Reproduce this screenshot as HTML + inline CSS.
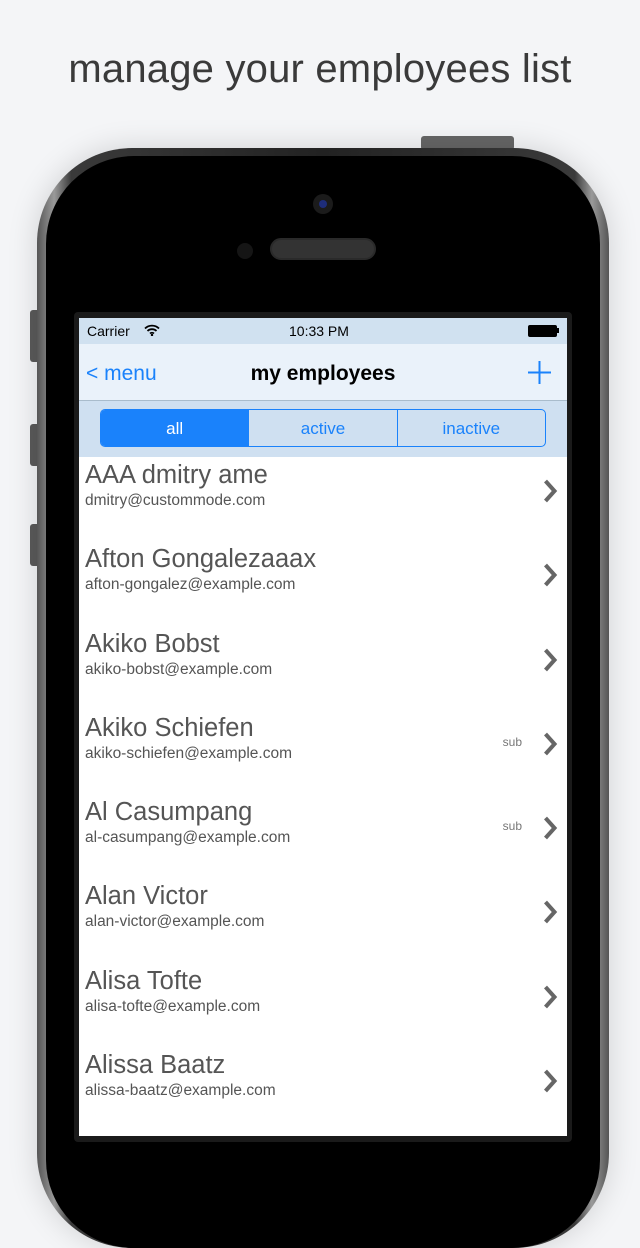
<!DOCTYPE html>
<html><head><meta charset="utf-8"><style>
*{margin:0;padding:0;box-sizing:border-box}
body{width:640px;height:1136px;background:#f4f5f7;overflow:hidden;position:relative;font-family:"Liberation Sans",sans-serif}
.h{position:absolute;top:47px;left:0;width:640px;text-align:center;font-size:40px;color:#3a3a3a;letter-spacing:0.2px}
.phone{position:absolute;left:37px;top:148px;width:572px;height:1100px;border-radius:95px;background:linear-gradient(90deg,#555,#9a9a9a 3%,#3a3a3a 6%,#222 50%,#3a3a3a 94%,#9a9a9a 97%,#555);box-shadow:0 0 30px rgba(0,0,0,.15)}
.inner{position:absolute;left:9px;top:8px;right:9px;bottom:0;border-radius:88px;background:#000}
.btn{position:absolute;background:#5a5a5a;border-radius:3px}
.screenfr{position:absolute;left:74px;top:312px;width:498px;height:830px;background:#1a1a1a;border-radius:4px}
.screen{position:absolute;left:79px;top:318px;width:488px;height:818px;background:#fff;overflow:hidden}
.sb{height:26px;background:#d0e1f0;position:relative;font-size:14px;color:#000}
.nav{height:57px;background:#eaf2fa;border-bottom:1px solid #a9bccc;position:relative}
.seg{height:56px;background:#cfe0f1;position:relative}
.segc{position:absolute;left:21px;top:8px;width:446px;height:38px;border:1.5px solid #1a82fb;border-radius:5px;display:flex;overflow:hidden}
.segc div{flex:1;text-align:center;line-height:38px;font-size:17px;color:#1a82fb;border-left:1.5px solid #1a82fb}
.segc div:first-child{border:none;background:#1a82fb;color:#fff}
.row{height:84.3px;position:relative}
.nm{position:absolute;left:6px;top:3px;font-size:25.5px;color:#555}
.em{position:absolute;left:6px;top:34px;font-size:15.5px;color:#555}
.sub{position:absolute;right:45px;top:24px;font-size:12px;color:#777}
.ch{position:absolute;right:9px;top:20px}
</style></head><body>
<div class="h">manage your employees list</div>
<div class="btn" style="left:421px;top:136px;width:93px;height:14px;background:#666"></div>
<div class="btn" style="left:30px;top:310px;width:10px;height:52px"></div>
<div class="btn" style="left:30px;top:424px;width:10px;height:42px"></div>
<div class="btn" style="left:30px;top:524px;width:10px;height:42px"></div>
<div class="phone"><div class="inner"></div></div>
<div style="position:absolute;left:313px;top:194px;width:20px;height:20px;border-radius:50%;background:#1b1b1b"></div>
<div style="position:absolute;left:319px;top:200px;width:8px;height:8px;border-radius:50%;background:#1e2d7a"></div>
<div style="position:absolute;left:237px;top:243px;width:16px;height:16px;border-radius:50%;background:#151515"></div>
<div style="position:absolute;left:270px;top:238px;width:106px;height:22px;border-radius:11px;background:#333;border:2px solid #2a2a2a"></div>
<div class="screenfr"></div>
<div class="screen">
<div class="sb"><span style="position:absolute;left:8px;top:5px">Carrier</span>
<svg style="position:absolute;left:65px;top:6px" width="16" height="12" viewBox="0 0 16 12"><path d="M1 4.5a10 10 0 0 1 14 0M3.5 7a6.5 6.5 0 0 1 9 0M6 9.5a3 3 0 0 1 4 0" stroke="#000" stroke-width="1.8" fill="none"/><circle cx="8" cy="11" r="1.2"/></svg>
<span style="position:absolute;left:210px;top:5px">10:33 PM</span>
<div style="position:absolute;left:449px;top:7px;width:29px;height:12px;border:1px solid #000;border-radius:2px;background:#000"></div><div style="position:absolute;left:478px;top:10px;width:2px;height:5px;background:#000"></div></div>
<div class="nav"><span style="position:absolute;left:7px;top:18px;font-size:21px;color:#1a82fb">&lt; menu</span>
<span style="position:absolute;left:0;width:488px;text-align:center;top:18px;font-size:21px;font-weight:bold;color:#000">my employees</span>
<svg style="position:absolute;left:449px;top:17px" width="23" height="23"><path d="M11.5 0v23M0 11.5h23" stroke="#1a82fb" stroke-width="2"/></svg></div>
<div class="seg"><div class="segc"><div>all</div><div>active</div><div>inactive</div></div></div>
<div style="position:relative;top:1px">
<div class="row"><div class="nm">AAA dmitry ame</div><div class="em">dmitry@custommode.com</div><svg class="ch" width="16" height="26"><path d="M3.5 3l9 10-9 10" stroke="#666" stroke-width="4" fill="none"/></svg></div>
<div class="row"><div class="nm">Afton Gongalezaaax</div><div class="em">afton-gongalez@example.com</div><svg class="ch" width="16" height="26"><path d="M3.5 3l9 10-9 10" stroke="#666" stroke-width="4" fill="none"/></svg></div>
<div class="row"><div class="nm">Akiko Bobst</div><div class="em">akiko-bobst@example.com</div><svg class="ch" width="16" height="26"><path d="M3.5 3l9 10-9 10" stroke="#666" stroke-width="4" fill="none"/></svg></div>
<div class="row"><div class="nm">Akiko Schiefen</div><div class="em">akiko-schiefen@example.com</div><div class="sub">sub</div><svg class="ch" width="16" height="26"><path d="M3.5 3l9 10-9 10" stroke="#666" stroke-width="4" fill="none"/></svg></div>
<div class="row"><div class="nm">Al Casumpang</div><div class="em">al-casumpang@example.com</div><div class="sub">sub</div><svg class="ch" width="16" height="26"><path d="M3.5 3l9 10-9 10" stroke="#666" stroke-width="4" fill="none"/></svg></div>
<div class="row"><div class="nm">Alan Victor</div><div class="em">alan-victor@example.com</div><svg class="ch" width="16" height="26"><path d="M3.5 3l9 10-9 10" stroke="#666" stroke-width="4" fill="none"/></svg></div>
<div class="row"><div class="nm">Alisa Tofte</div><div class="em">alisa-tofte@example.com</div><svg class="ch" width="16" height="26"><path d="M3.5 3l9 10-9 10" stroke="#666" stroke-width="4" fill="none"/></svg></div>
<div class="row"><div class="nm">Alissa Baatz</div><div class="em">alissa-baatz@example.com</div><svg class="ch" width="16" height="26"><path d="M3.5 3l9 10-9 10" stroke="#666" stroke-width="4" fill="none"/></svg></div>
</div>
</div>
</body></html>
